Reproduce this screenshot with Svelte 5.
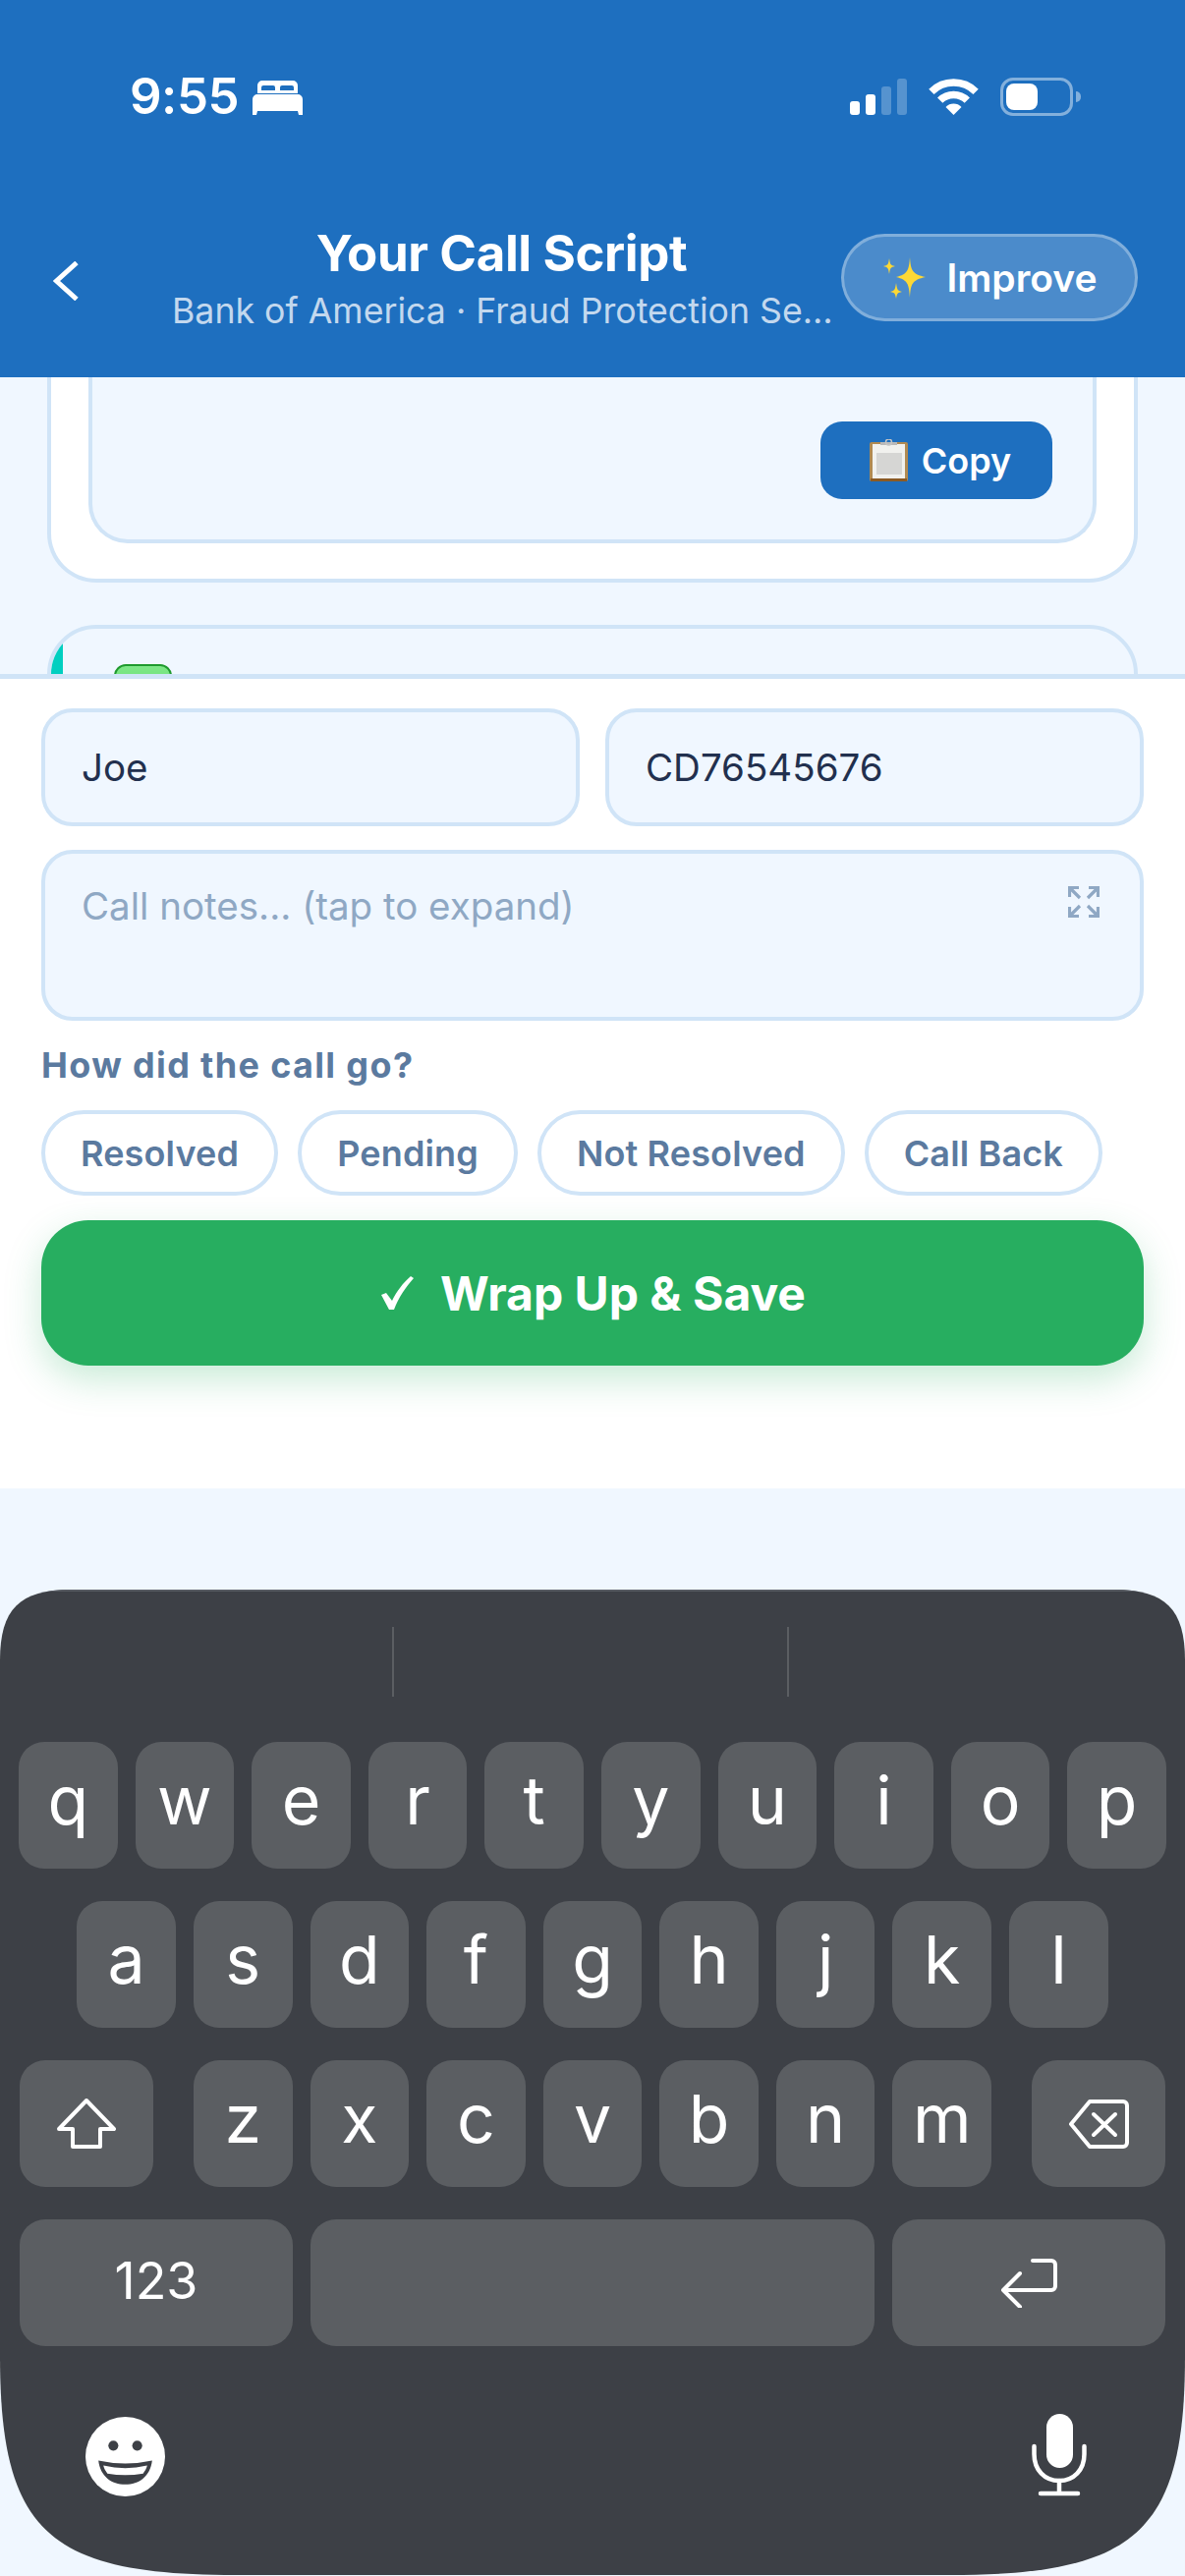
<script lang="ts">
	const rows = ['qwertyuiop', 'asdfghjkl'].map((r) => r.split(''));
	const lower = 'zxcvbnm'.split('');
	const outcomes = ['Resolved', 'Pending', 'Not Resolved', 'Call Back'];
</script>

<div class="page">
	<header class="top">
		<div class="status">
			<div class="status__left">
				<span class="status__time">9:55</span>
				<svg class="bed" viewBox="0 0 51 35" width="51" height="35">
					<path fill="#fff" fill-rule="evenodd" d="M10 0H41a5 5 0 0 1 5 5V13H5V5a5 5 0 0 1 5-5ZM9 10H23V7a2 2 0 0 0-2-2H11a2 2 0 0 0-2 2ZM28 10H42V7a2 2 0 0 0-2-2H30a2 2 0 0 0-2 2Z" />
					<path fill="#fff" d="M5 14H46a5 5 0 0 1 5 5V35H47L46 31H5L4 35H0V19a5 5 0 0 1 5-5Z" />
				</svg>
			</div>
			<div class="status__right">
				<div class="signal">
					<i class="signal__on" style="height:14px"></i>
					<i class="signal__on" style="height:21px"></i>
					<i style="height:29px"></i>
					<i style="height:37px"></i>
				</div>
				<svg viewBox="0 0 51 37" width="51" height="37">
					<g fill="none" stroke="#fff" stroke-width="7.5">
						<path d="M2.9 13.4A32 32 0 0 1 48.1 13.4" />
						<path d="M11.7 22.2A19.5 19.5 0 0 1 39.3 22.2" />
					</g>
					<path fill="#fff" d="M25.5 37L17.5 29A11 11 0 0 1 33.5 29Z" />
				</svg>
				<div class="battery">
					<div class="battery__body"><div class="battery__fill"></div></div>
					<div class="battery__nub"></div>
				</div>
			</div>
		</div>

		<nav class="nav">
			<button type="button" class="nav__back" aria-label="Back">
				<svg viewBox="0 0 27 40" width="27" height="40">
					<path d="M24 1.5L3.5 20L24 38.5" fill="none" stroke="#fff" stroke-width="5" stroke-linecap="butt" stroke-linejoin="miter" />
				</svg>
			</button>
			<div class="nav__title">
				<h1>Your Call Script</h1>
				<p>Bank of America · Fraud Protection Se…</p>
			</div>
			<button type="button" class="improve">
				<svg viewBox="0 0 44 42" width="44" height="42">
					<path fill="#fdd835" d="M27 0C28 13 29 17 43 20C29 23 28 27 27 41C26 27 25 23 13 20C25 17 26 13 27 0Z" />
					<path fill="#fdd835" d="M6 1C7 7 7 8 12 9C7 10 7 11 6 17C5 11 5 10 0 9C5 8 5 7 6 1Z" />
					<path fill="#fdd835" d="M13 26C14 32 14 34 19 35C14 36 14 37 13 42C12 37 12 36 7 35C12 34 12 32 13 26Z" />
				</svg>
				Improve
			</button>
		</nav>
	</header>

	<main class="scroll">
		<section class="card">
			<div class="card__inner">
				<button type="button" class="copy">
					<svg viewBox="0 0 39 43" width="39" height="43">
						<rect x="0" y="3" width="39" height="40" rx="2" fill="#b08a52" />
						<rect x="1" y="40" width="37" height="3" fill="#8a5a24" />
						<rect x="3" y="5" width="33" height="35" fill="#f1f1ee" />
						<rect x="7" y="14" width="26" height="22" fill="#d6d6d4" />
						<rect x="11" y="3" width="17" height="3" fill="#b9b9b9" />
						<circle cx="19.5" cy="3" r="3" fill="none" stroke="#c4c4c4" stroke-width="1.5" />
					</svg>
					Copy
				</button>
			</div>
		</section>

		<section class="card card--next">
			<div class="card__strip"></div>
			<div class="card__body">
				<div class="card__badge"></div>
			</div>
		</section>
	</main>

	<section class="sheet">
		<div class="fields">
			<input class="field" value="Joe" readonly />
			<input class="field" value="CD76545676" readonly />
		</div>

		<div class="notes">
			<textarea class="field field--notes" placeholder="Call notes... (tap to expand)" readonly></textarea>
			<svg class="notes__icon" viewBox="0 0 32 32" width="32" height="32">
				<g fill="none" stroke="#8fa8c4" stroke-width="3.2">
					<path d="M1.5 11V1.5H11M1.5 1.5L12 12" />
					<path d="M30.5 11V1.5H21M30.5 1.5L20 12" />
					<path d="M1.5 21V30.5H11M1.5 30.5L12 20" />
					<path d="M30.5 21V30.5H21M30.5 30.5L20 20" />
				</g>
			</svg>
		</div>

		<div class="outcome-label">How did the call go?</div>
		<div class="outcomes">
			{#each outcomes as o}
				<button type="button" class="pill">{o}</button>
			{/each}
		</div>

		<button type="button" class="wrap">
			<svg viewBox="0 0 36 34" width="36" height="34">
				<path d="M2 19L7 17L13 25C18 15 24 7 32 0L35 2C27 11 20 21 15 34H10Z" fill="#fff" />
			</svg>
			Wrap Up &amp; Save
		</button>
	</section>

	<div class="spacer"></div>

	<section class="kb">
		<div class="kb__predict"><span></span><span></span><span></span></div>

		<div class="kb__rows">
			{#each rows as row}
				<div class="kb__row">
					{#each row as k}
						<div class="key">{k}</div>
					{/each}
				</div>
			{/each}

			<div class="kb__row kb__row--split">
				<div class="key key--fn" aria-label="Shift">
					<svg viewBox="0 0 60 51" width="60" height="51">
						<path d="M30 2L58 31H44V49H16V31H2Z" fill="none" stroke="#fff" stroke-width="4" stroke-linejoin="round" />
					</svg>
				</div>
				<div class="kb__group">
					{#each lower as k}
						<div class="key">{k}</div>
					{/each}
				</div>
				<div class="key key--fn" aria-label="Delete">
					<svg viewBox="0 0 61 50" width="61" height="50">
						<path d="M21 2H55a4 4 0 0 1 4 4V44a4 4 0 0 1-4 4H21L2 25Z" fill="none" stroke="#fff" stroke-width="4" stroke-linejoin="round" />
						<path d="M25 15L47 36M47 15L25 36" fill="none" stroke="#fff" stroke-width="4" stroke-linecap="round" />
					</svg>
				</div>
			</div>

			<div class="kb__row kb__row--bottom">
				<div class="key key--wide key--num">123</div>
				<div class="key key--space"></div>
				<div class="key key--wide" aria-label="Return">
					<svg viewBox="0 0 59 50" width="59" height="50">
						<path d="M33 2H52a4 4 0 0 1 4 4V28a4 4 0 0 1-4 4H3M20 15L3 32L20 49" fill="none" stroke="#fff" stroke-width="4" stroke-linecap="round" stroke-linejoin="round" />
					</svg>
				</div>
			</div>
		</div>

		<div class="kb__tools">
			<svg viewBox="0 0 80 80" width="81" height="81">
				<circle cx="40" cy="40" r="40" fill="#fff" />
				<circle cx="28" cy="29" r="5" fill="#3d4046" />
				<circle cx="52" cy="29" r="5" fill="#3d4046" />
				<path d="M13 44Q40 50 67 44C65 60 54 68 40 68C26 68 15 60 13 44Z" fill="#3d4046" />
				<path d="M18 49Q40 54 62 49C61 53 60 54 58 57Q40 60 22 57C20 54 19 53 18 49Z" fill="#fff" />
			</svg>
			<svg viewBox="0 0 56 84" width="56" height="84">
				<rect x="15" y="0" width="27" height="55" rx="13.5" fill="#fff" />
				<path d="M2.5 33V41C2.5 57 13 68 28 68C43 68 53.5 57 53.5 41V33" fill="none" stroke="#fff" stroke-width="4.5" stroke-linecap="round" />
				<path d="M28 68V81M9 81H47" fill="none" stroke="#fff" stroke-width="4.5" stroke-linecap="round" />
			</svg>
		</div>
	</section>
</div>

<style>
	:global(body) {
		margin: 0;
		background: #f0f7ff;
	}

	.page {
		width: 1206px;
		height: 2622px;
		overflow: hidden;
		display: flex;
		flex-direction: column;
		background: #f0f7ff;
		font-family: Inter, "Liberation Sans", sans-serif;
	}

	button {
		font-family: inherit;
		cursor: pointer;
	}

	/* header */
	.top {
		height: 384px;
		flex: none;
		box-sizing: border-box;
		padding-top: 78px;
		background: #1e6fbf;
		color: #fff;
	}

	.status {
		height: 40px;
		display: flex;
		justify-content: space-between;
		align-items: center;
		padding: 0 106px 0 132px;
	}

	.status__left {
		display: flex;
		align-items: center;
		gap: 14px;
	}

	.status__time {
		font-size: 51px;
		font-weight: 600;
		line-height: 40px;
		letter-spacing: -0.5px;
	}

	.bed {
		margin-top: 3px;
	}

	.status__right {
		display: flex;
		align-items: center;
		gap: 22px;
	}

	.signal {
		display: flex;
		align-items: flex-end;
		gap: 6px;
		height: 37px;
	}

	.signal i {
		width: 10px;
		border-radius: 3px;
		background: rgba(255, 255, 255, 0.25);
	}

	.signal .signal__on {
		background: #fff;
	}

	.battery {
		display: flex;
		align-items: center;
		gap: 3px;
	}

	.battery__body {
		width: 74px;
		height: 39px;
		box-sizing: border-box;
		padding: 3px;
		border: 3px solid rgba(255, 255, 255, 0.45);
		border-radius: 13px;
	}

	.battery__fill {
		width: 32px;
		height: 27px;
		border-radius: 8px;
		background: #fff;
	}

	.battery__nub {
		width: 5px;
		height: 11px;
		border-radius: 0 6px 6px 0;
		background: rgba(255, 255, 255, 0.45);
	}

	.nav {
		margin-top: 120px;
		height: 89px;
		display: flex;
		align-items: center;
		padding: 0 48px 0 54px;
	}

	.nav__back {
		width: 121px;
		flex: none;
		padding: 10px 0 0;
		border: none;
		background: none;
		text-align: left;
	}

	.nav__title {
		flex: 1;
		min-width: 0;
		margin-right: 10px;
		text-align: center;
	}

	.nav__title h1 {
		margin: 2px 0 0;
		font-size: 51px;
		line-height: 58px;
		font-weight: 700;
		letter-spacing: -0.4px;
	}

	.nav__title p {
		margin: 7px 0 0;
		font-size: 35.7px;
		line-height: 44px;
		color: #c3d8ee;
		white-space: nowrap;
	}

	.improve {
		width: 302px;
		height: 89px;
		flex: none;
		display: flex;
		align-items: center;
		justify-content: center;
		gap: 20px;
		box-sizing: border-box;
		padding: 0 0 0 2px;
		border: 3px solid rgba(255, 255, 255, 0.3);
		border-radius: 45px;
		background: rgba(255, 255, 255, 0.2);
		color: #fff;
		font-size: 39px;
		font-weight: 600;
	}

	/* scrolled content */
	.scroll {
		height: 302px;
		flex: none;
		box-sizing: border-box;
		padding: 0 48px;
		overflow: hidden;
	}

	.card {
		box-sizing: border-box;
		border: 4px solid #d0e4f7;
		border-radius: 50px;
		background: #fff;
	}

	.card:first-child {
		margin-top: -60px;
		padding: 0 38px 36px;
		border-top: none;
		border-top-left-radius: 0;
		border-top-right-radius: 0;
	}

	.card__inner {
		height: 229px;
		box-sizing: border-box;
		padding: 105px 41px 0 0;
		display: flex;
		justify-content: flex-end;
		align-items: flex-start;
		border: 4px solid #d0e4f7;
		border-top: none;
		border-radius: 0 0 40px 40px;
		background: #f0f7ff;
	}

	.copy {
		width: 236px;
		height: 79px;
		display: flex;
		align-items: center;
		justify-content: center;
		gap: 14px;
		padding: 0 0 0 8px;
		border: none;
		border-radius: 22px;
		background: #1e6fbf;
		color: #fff;
		font-size: 36px;
		font-weight: 600;
	}

	.card--next {
		margin-top: 43px;
		height: 200px;
		display: flex;
		overflow: hidden;
		background: #f0f7ff;
	}

	.card__strip {
		width: 12px;
		background: #00cfc0;
	}

	.card__body {
		padding: 36px 0 0 52px;
	}

	.card__badge {
		width: 59px;
		height: 60px;
		box-sizing: border-box;
		border: 2px solid #1f9a2e;
		border-radius: 12px;
		background: linear-gradient(#7fe888, #4fd05c);
	}

	/* bottom sheet */
	.sheet {
		height: 829px;
		flex: none;
		box-sizing: border-box;
		padding: 30px 42px 0;
		border-top: 5px solid #d0e4f7;
		background: #fff;
	}

	.fields {
		display: grid;
		grid-template-columns: 1fr 1fr;
		gap: 26px;
	}

	.field {
		display: block;
		width: 100%;
		height: 120px;
		box-sizing: border-box;
		padding: 0 37px;
		border: 4px solid #d0e4f7;
		border-radius: 32px;
		outline: none;
		background: #f0f7ff;
		color: #22304e;
		font-family: inherit;
		font-size: 38.5px;
	}

	.notes {
		position: relative;
		margin-top: 24px;
	}

	.field--notes {
		height: 174px;
		padding-top: 30px;
		resize: none;
	}

	.field--notes::placeholder {
		color: #8fa8c4;
		opacity: 1;
	}

	.notes__icon {
		position: absolute;
		top: 37px;
		right: 45px;
	}

	.outcome-label {
		margin-top: 23px;
		font-size: 36px;
		line-height: 44px;
		font-weight: 700;
		letter-spacing: 1.35px;
		color: #5b7a9f;
	}

	.outcomes {
		display: flex;
		gap: 20px;
		margin-top: 24px;
	}

	.pill {
		height: 87px;
		box-sizing: border-box;
		padding: 0 36px;
		border: 4px solid #d0e4f7;
		border-radius: 44px;
		background: #fff;
		color: #5b7a9f;
		font-size: 36px;
		font-weight: 600;
		letter-spacing: 0.15px;
	}

	.wrap {
		width: 100%;
		height: 148px;
		margin-top: 25px;
		display: flex;
		align-items: center;
		justify-content: center;
		gap: 26px;
		padding: 0;
		border: none;
		border-radius: 48px;
		background: #27ae60;
		color: #fff;
		font-size: 48px;
		font-weight: 700;
		box-shadow: 0 14px 36px rgba(39, 174, 96, 0.25);
	}

	.spacer {
		height: 103px;
		flex: none;
	}

	/* keyboard */
	.kb {
		height: 1004px;
		flex: none;
		box-sizing: border-box;
		padding-top: 38px;
		clip-path: path('M0 72C0 20 20 0 72 0H1134C1186 0 1206 20 1206 72V780C1206 960 1156 1003 966 1003H240C50 1003 0 960 0 780Z');
		background: #3d4046;
		box-shadow: inset 0 2px 0 #565a61;
		color: #fff;
	}

	.kb__predict {
		height: 71px;
		display: grid;
		grid-template-columns: 401px 402px 1fr;
	}

	.kb__predict span:not(:last-child) {
		border-right: 2px solid #5b5e62;
	}

	.kb__rows {
		display: flex;
		flex-direction: column;
		gap: 33px;
		margin-top: 46px;
		padding: 0 20px;
	}

	.kb__row {
		display: flex;
		justify-content: center;
		gap: 18px;
	}

	.kb__row--split {
		justify-content: space-between;
		gap: 0;
	}

	.kb__group {
		display: flex;
		gap: 18px;
	}

	.key {
		width: 100.6px;
		height: 129px;
		box-sizing: border-box;
		padding-bottom: 12px;
		display: flex;
		align-items: center;
		justify-content: center;
		flex: none;
		border-radius: 26px;
		background: #5b5e62;
		font-size: 68px;
		font-weight: 400;
	}

	.key--fn {
		width: 136px;
		padding-bottom: 0;
	}

	.key--wide {
		width: 278px;
		padding-bottom: 0;
	}

	.key--num {
		padding-bottom: 4px;
		font-size: 52px;
		font-weight: 400;
	}

	.key--space {
		flex: 1;
	}

	.kb__tools {
		display: flex;
		justify-content: space-between;
		align-items: flex-end;
		margin-top: 69px;
		padding: 0 100px 0 87px;
	}
</style>
